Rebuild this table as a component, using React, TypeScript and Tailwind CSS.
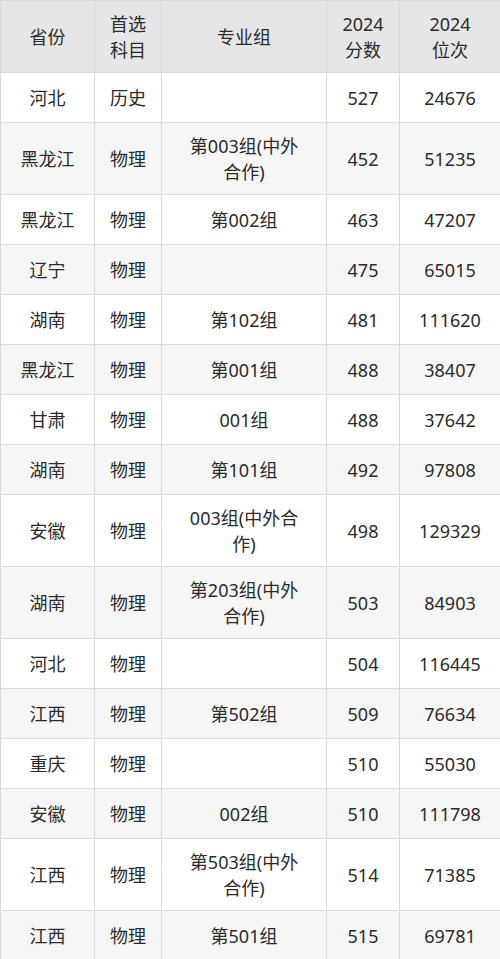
import React from 'react'

type Row = {
  prov: string
  subj: string
  group: string[]
  score: string
  rank: string
}

const rows: Row[] = [
  { prov: '河北', subj: '历史', group: [], score: '527', rank: '24676' },
  { prov: '黑龙江', subj: '物理', group: ['第003组(中外', '合作)'], score: '452', rank: '51235' },
  { prov: '黑龙江', subj: '物理', group: ['第002组'], score: '463', rank: '47207' },
  { prov: '辽宁', subj: '物理', group: [], score: '475', rank: '65015' },
  { prov: '湖南', subj: '物理', group: ['第102组'], score: '481', rank: '111620' },
  { prov: '黑龙江', subj: '物理', group: ['第001组'], score: '488', rank: '38407' },
  { prov: '甘肃', subj: '物理', group: ['001组'], score: '488', rank: '37642' },
  { prov: '湖南', subj: '物理', group: ['第101组'], score: '492', rank: '97808' },
  { prov: '安徽', subj: '物理', group: ['003组(中外合', '作)'], score: '498', rank: '129329' },
  { prov: '湖南', subj: '物理', group: ['第203组(中外', '合作)'], score: '503', rank: '84903' },
  { prov: '河北', subj: '物理', group: [], score: '504', rank: '116445' },
  { prov: '江西', subj: '物理', group: ['第502组'], score: '509', rank: '76634' },
  { prov: '重庆', subj: '物理', group: [], score: '510', rank: '55030' },
  { prov: '安徽', subj: '物理', group: ['002组'], score: '510', rank: '111798' },
  { prov: '江西', subj: '物理', group: ['第503组(中外', '合作)'], score: '514', rank: '71385' },
  { prov: '江西', subj: '物理', group: ['第501组'], score: '515', rank: '69781' },
]

const cell = 'border border-[#dadada] text-center align-middle p-0'

export default function App() {
  return (
    <div
      className="w-[500px] bg-white text-[#2b2b2b] text-[18px] leading-[26px]"
      style={{ fontFamily: '"Noto Sans", "Noto Sans CJK SC", sans-serif' }}
    >
      <table className="w-[500px] table-fixed border-collapse">
        <colgroup>
          <col className="w-[94px]" />
          <col className="w-[67px]" />
          <col className="w-[165px]" />
          <col className="w-[73px]" />
          <col className="w-[101px]" />
        </colgroup>
        <thead>
          <tr className="h-[72px] bg-[#e6e6e6]">
            <th className={`${cell} font-normal`}>省份</th>
            <th className={`${cell} font-normal`}>
              首选
              <br />
              科目
            </th>
            <th className={`${cell} font-normal`}>专业组</th>
            <th className={`${cell} font-normal`}>
              2024
              <br />
              分数
            </th>
            <th className={`${cell} font-normal`}>
              2024
              <br />
              位次
            </th>
          </tr>
        </thead>
        <tbody>
          {rows.map((r, i) => (
            <tr
              key={i}
              className={`${r.group.length > 1 ? 'h-[72px]' : 'h-[50px]'} ${
                i % 2 === 1 ? 'bg-[#f6f6f6]' : 'bg-white'
              }`}
            >
              <td className={cell}>{r.prov}</td>
              <td className={cell}>{r.subj}</td>
              <td className={cell}>
                {r.group.map((g, j) => (
                  <div key={j}>{g}</div>
                ))}
              </td>
              <td className={cell}>{r.score}</td>
              <td className={cell}>{r.rank}</td>
            </tr>
          ))}
        </tbody>
      </table>
    </div>
  )
}
